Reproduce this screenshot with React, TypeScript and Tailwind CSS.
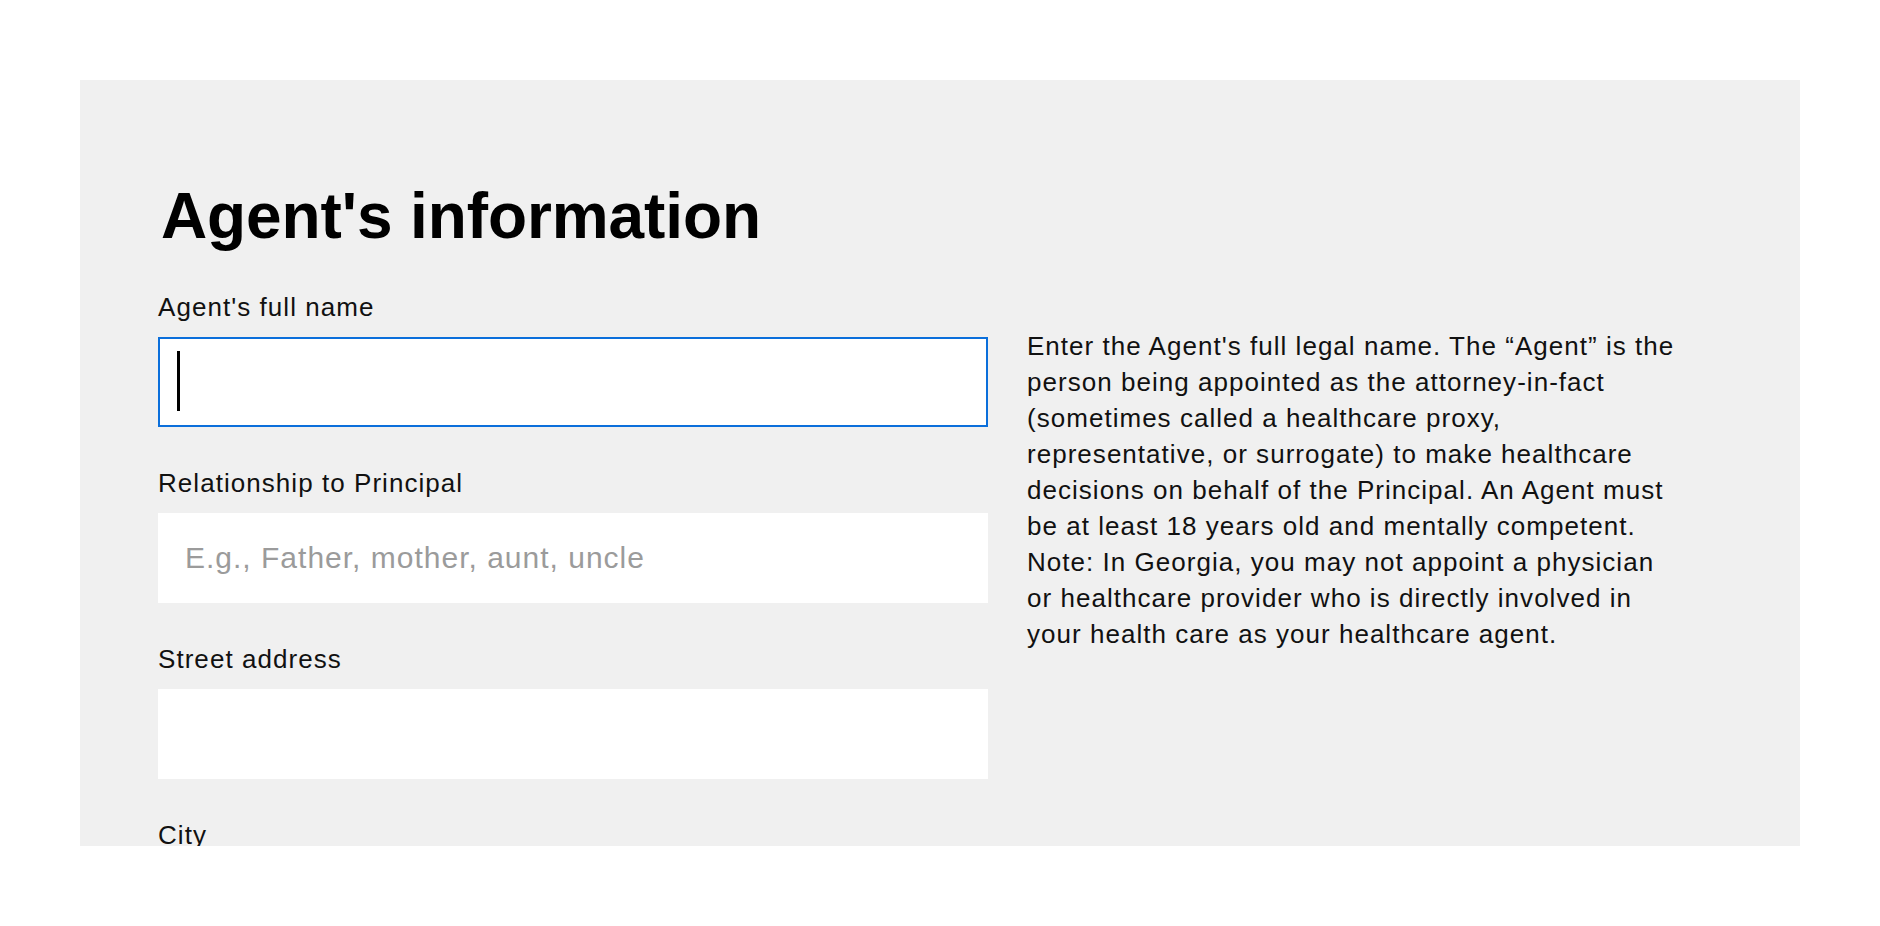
import React from "react";

function Field({
  label,
  placeholder,
  focused,
}: {
  label: string;
  placeholder?: string;
  focused?: boolean;
}) {
  return (
    <div className="flex flex-col mb-[40px]">
      <label className="text-[26px] leading-[32px] tracking-[1.05px] text-[#111] mb-[14px]">
        {label}
      </label>
      <div className="relative">
        <input
          type="text"
          readOnly
          placeholder={placeholder}
          className={
            focused
              ? "block w-[830px] h-[90px] bg-white border-2 border-[#0b6fdb] px-[25px] text-[30px] tracking-[1px] outline-none placeholder:text-[#9b9b9b]"
              : "block w-[830px] h-[90px] bg-white border-2 border-white px-[25px] text-[30px] tracking-[1px] outline-none placeholder:text-[#9b9b9b]"
          }
        />
        {focused && (
          <span className="absolute left-[19px] top-[14px] w-[3px] h-[60px] bg-black" />
        )}
      </div>
    </div>
  );
}

export default function App() {
  return (
    <div
      className="min-h-[926px] bg-white pt-[80px] px-[80px]"
      style={{ fontFamily: '"Liberation Sans", Arial, Helvetica, sans-serif' }}
    >
      <div className="h-[766px] overflow-hidden bg-[#f0f0f0] pl-[78px] pt-[104px]">
        <h1 className="ml-[3px] text-[64px] leading-[64px] font-bold text-black tracking-[-0.1px]">
          Agent's information
        </h1>
        <div className="flex flex-row gap-[39px] mt-[43px]">
          <div className="flex flex-col w-[830px]">
            <Field label="Agent's full name" focused />
            <Field
              label="Relationship to Principal"
              placeholder="E.g., Father, mother, aunt, uncle"
            />
            <Field label="Street address" />
            <Field label="City" />
          </div>
          <p className="w-[652px] mt-[37px] text-[26px] leading-[36px] tracking-[1.03px] text-[#111]">
            Enter the Agent's full legal name. The “Agent” is the person being
            appointed as the attorney-in-fact (sometimes called a healthcare
            proxy, representative, or surrogate) to make healthcare decisions on
            behalf of the Principal. An Agent must be at least 18 years old and
            mentally competent. Note: In Georgia, you may not appoint a physician
            or healthcare provider who is directly involved in your health care as
            your healthcare agent.
          </p>
        </div>
      </div>
    </div>
  );
}
